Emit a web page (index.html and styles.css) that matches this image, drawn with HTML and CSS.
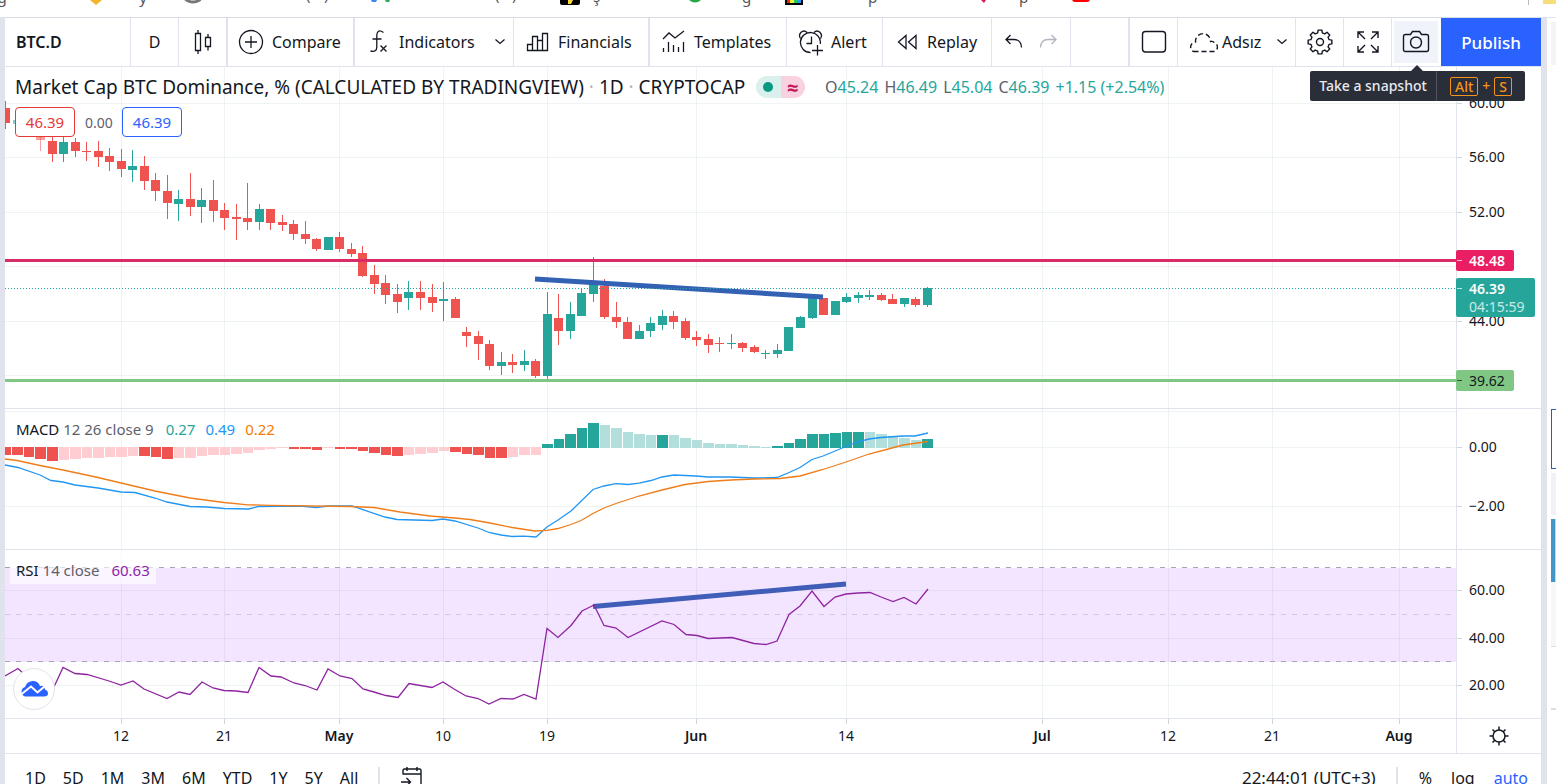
FILE: index.html
```html
<!DOCTYPE html>
<html lang="en">
<head>
<meta charset="utf-8">
<title>BTC.D 46.39</title>
<link rel="stylesheet" href="styles.css">
</head>
<body>
<div class="app">
  <div class="bookmarks">
    <svg width="100%" height="17" aria-hidden="true">
      <g class="bm-text">
        <text x="2" y="3" text-anchor="middle">g</text>
        <text x="143" y="3" text-anchor="middle">y</text>
        <text x="306" y="0">(</text><text x="324" y="0">)</text>
        <text x="495" y="0">(</text><text x="512" y="0">)</text>
        <text x="593" y="2">ş</text>
        <text x="742" y="3">g</text>
        <text x="868" y="3">p</text>
        <text x="1019" y="3">p</text>
      </g>
      <path d="M90 0h12l-6 5z" fill="#f4b42c"/>
      <path d="M185 -3a8 5 0 0 0 16 0" fill="none" stroke="#777" stroke-width="3"/>
      <path d="M371 0h6l-1 2h-4z" fill="#4285f4"/><path d="M385 0h5l-1 2h-3z" fill="#34a853"/>
      <rect x="560" y="-6" width="20" height="11" rx="2" fill="#000"/><path d="M568 0h5l-2 4h-3z" fill="#fdd835"/>
      <path d="M689 0h12q-6 5-12 0z" fill="#28a745"/>
      <rect x="785" y="0" width="18" height="5" fill="#000"/><path d="M787 0h3v3h-3z" fill="#e22"/><path d="M790 0h4v3h-4z" fill="#ee3"/><path d="M794 0h3v3h-3z" fill="#2c5"/><path d="M797 0h4v3h-4z" fill="#29f"/>
      <path d="M981 0h5l-2 3z" fill="#d81b60"/>
      <rect x="1072" y="-8" width="18" height="10" rx="3" fill="#f00"/>
      <path d="M1528.500 0v5" stroke="#bbb"/>
      <rect x="1543" y="-8" width="20" height="12" rx="1" fill="#f8dc78"/>
    </svg>
  </div>
  <div class="workspace">
    <main class="terminal">
      <header class="toolbar">
        <button class="tb tb-symbol">BTC.D</button>
        <button class="tb tb-icon">D</button>
        <button class="tb tb-icon thick" aria-label="Candles">
          <svg width="28" height="28"><path fill="none" stroke="currentColor" stroke-width="1.300" d="M6.500 5.500h5v17h-5zM9 2v3.500M9 22.500v3.500M16.500 9.500h5v9h-5zM19 6v3.500M19 18.500v4"/></svg>
        </button>
        <button class="tb tb-compare thick">
          <svg width="26" height="26"><g fill="none" stroke="currentColor" stroke-width="1.300"><circle cx="13" cy="13" r="11.500"/><path d="M7 13h12M13 7v12"/></g></svg>
          Compare
        </button>
        <button class="tb tb-indicators">
          <svg width="22" height="26"><g fill="none" stroke="currentColor" stroke-width="1.300"><path d="M15.500 3.500Q9.500-.5 8.800 6V18q0 5.500-6.300 4M4.500 10h9M12.500 16.500l6 6M18.500 16.500l-6 6"/></g></svg>
          <span>Indicators</span>
          <svg class="caret" width="12" height="8"><path d="M1.500 1.500l4.500 4 4.500-4" fill="none" stroke="currentColor" stroke-width="1.300"/></svg>
        </button>
        <button class="tb tb-financials thick">
          <svg width="24" height="24"><g fill="none" stroke="currentColor" stroke-width="1.300"><path d="M1.500 14.500h5v6h-5zM6.500 6.500h5v14h-5zM11.500 10.500h5v10h-5zM16.500 3.500h5v17h-5z"/></g></svg>
          Financials
        </button>
        <button class="tb tb-templates">
          <svg width="24" height="26"><g fill="none" stroke="currentColor" stroke-width="1.300"><path d="M1 10l6-6 6 5 9-7M1.500 19v4M6.500 13v10M11.500 16v7M16.500 18v5M21.500 13v10"/></g></svg>
          Templates
        </button>
        <button class="tb tb-alert">
          <svg width="26" height="28"><g fill="none" stroke="currentColor" stroke-width="1.300"><path d="M12.500 24.500A10 10 0 1 1 22.300 16M13.500 8.500v7H8.500M14 22.500h11M19.500 17v10.500M2.500 10.500C-.5 6 5 .5 9 4.500M22.500 10.500C25.500 6 20 .5 16 4.500"/></g></svg>
          Alert
        </button>
        <button class="tb tb-replay">
          <svg width="20" height="18"><g fill="none" stroke="currentColor" stroke-width="1.300"><path d="M9 2.500v13L1.500 9zM19 2.500v13L11.500 9z"/></g></svg>
          Replay
        </button>
        <div class="tb tb-history">
          <button class="bare" aria-label="Undo"><svg width="20" height="18"><path d="M6.500 2L2 6.500 6.500 11M2 6.500h8q7 0 7.500 8" fill="none" stroke="currentColor" stroke-width="1.300"/></svg></button>
          <button class="bare" aria-label="Redo" disabled><svg width="20" height="18"><path d="M13.500 2L18 6.500 13.500 11M18 6.500h-8q-7 0-7.500 8" fill="none" stroke="currentColor" stroke-width="1.300"/></svg></button>
        </div>
        <div class="tb tb-fill thick"></div>
        <button class="tb tb-icon" aria-label="Select layout"><svg width="26" height="24"><rect x="1.500" y="1.500" width="23" height="20.500" rx="3" fill="none" stroke="currentColor" stroke-width="1.400"/></svg></button>
        <button class="tb tb-layout">
          <svg width="32" height="24"><path d="M6.500 21.500h19.500a4.500 4.500 0 0 0 2-8.500q-2-2-4.500-1.500a7.500 7.500 0 0 0-14.500-3q-.6 1.500-.5 3.500A5 5 0 0 0 6.500 21.500z" fill="none" stroke="currentColor" stroke-width="1.400" stroke-dasharray="5 3"/></svg>
          <span>Adsız</span>
          <svg class="caret" width="12" height="8"><path d="M1.500 1.500l4.500 4 4.500-4" fill="none" stroke="currentColor" stroke-width="1.300"/></svg>
        </button>
        <button class="tb tb-icon" aria-label="Chart settings">
          <svg width="28" height="28" viewBox="-14 -14 28 28"><g fill="none" stroke="currentColor" stroke-width="1.400"><circle r="3.500"/><path id="gear" stroke-linejoin="round"/></g></svg>
        </button>
        <button class="tb tb-icon" aria-label="Fullscreen">
          <svg width="24" height="24"><path d="M2 8V2h6M2 2l7 7M16 2h6v6M22 2l-7 7M2 16v6h6M2 22l7-7M22 16v6h-6M22 22l-7-7" fill="none" stroke="currentColor" stroke-width="1.400"/></svg>
        </button>
        <div class="tb-snap">
          <button class="snap" aria-label="Take a snapshot">
            <svg width="28" height="24"><g fill="none" stroke="currentColor" stroke-width="1.400"><path d="M3.500 4.500h5l2-3h7l2 3h5q2 0 2 2v13q0 2-2 2h-21q-2 0-2-2v-13q0-2 2-2z"/><circle cx="14" cy="12.500" r="5.500"/></g></svg>
          </button>
          <div class="tooltip" role="tooltip"><span class="tip-text">Take a snapshot</span><span class="tip-keys"><kbd>Alt</kbd>+<kbd>S</kbd></span></div>
        </div>
        <button class="publish">Publish</button>
      </header>

      <div class="charts">
        <section class="pane pane-price">
          <svg class="plot" id="plot-price" width="100%" height="341"></svg>
          <div class="legend">
            <div class="title-row">
              <span class="title">Market Cap BTC Dominance, % (CALCULATED BY TRADINGVIEW) <i>·</i> 1D <i>·</i> CRYPTOCAP</span>
              <span class="status"><b class="st-open"></b><b class="st-delay">≈</b></span>
              <span class="ohlc"><span>O<em>45.24</em></span><span>H<em>46.49</em></span><span>L<em>45.04</em></span><span>C<em>46.39</em></span><em>+1.15 (+2.54%)</em></span>
            </div>
            <div class="trade-row"><button class="sell">46.39</button><span class="spread">0.00</span><button class="buy">46.39</button></div>
          </div>
        </section>
        <svg class="scale" id="scale-price" width="84" height="341"></svg>
        <section class="pane">
          <svg class="plot" id="plot-macd" width="100%" height="140"></svg>
          <div class="study">MACD <span class="args">12 26 close 9</span><span class="v-green">0.27</span><span class="v-blue">0.49</span><span class="v-orange">0.22</span></div>
        </section>
        <svg class="scale" id="scale-macd" width="84" height="140"></svg>
        <section class="pane">
          <svg class="plot" id="plot-rsi" width="100%" height="168"></svg>
          <div class="study study-rsi">RSI <span class="args">14 close</span><span class="v-purple">60.63</span></div>
          <a class="logo" href="#" aria-label="TradingView"><svg width="28" height="18"><path d="M5 16.500a5 5 0 0 1 0-9.500Q7 1 13 1q5 0 7 5 4-1 5 3.500 3 1 3 4t-4 3z" fill="#2962ff"/><path d="M1 14.500l10-8 6.500 6L25 6" fill="none" stroke="#fff" stroke-width="2"/></svg></a>
        </section>
        <svg class="scale" id="scale-rsi" width="84" height="168"></svg>
        <svg class="times" id="times" width="100%" height="34"></svg>
        <button class="scale scale-settings" aria-label="Scale settings">
          <svg width="20" height="20" viewBox="-10 -10 20 20"><g fill="none" stroke="currentColor" stroke-width="1.500"><circle r="6"/><path d="M0-9.500V-6M0 9.500V6M-9.500 0H-6M9.500 0H6M-6.500-6.500L-4-4M6.500 6.500L4 4M-6.500 6.500L-4 4M6.500-6.500L4-4"/></g></svg>
        </button>
      </div>

      <footer class="ranges">
        <div class="range-list">
          <button>1D</button><button>5D</button><button>1M</button><button>3M</button><button>6M</button><button>YTD</button><button>1Y</button><button>5Y</button><button>All</button>
        </div>
        <button class="goto" aria-label="Go to date"><svg width="24" height="24"><path d="M3 8.500V4.500q0-1.500 1.500-1.500h15q1.500 0 1.500 1.500V20.500h-7M3 8h18M7 1v4M17 1v4M1 16h9M6.500 12l4 4-4 4" fill="none" stroke="currentColor" stroke-width="1.400"/></svg></button>
        <button class="clock">22:44:01 (UTC+3)</button>
        <div class="modes"><button>%</button><button>log</button><button class="on">auto</button></div>
      </footer>
    </main>
    <aside class="side">
      <div class="s-head"></div><div class="s-gap"></div><div class="s-box"></div><div class="s-grey"></div><div class="s-blue"></div><div class="s-pale"></div><div class="s-row"></div>
    </aside>
  </div>
</div>
<script src="chart.js"></script>
</body>
</html>
```

FILE: styles.css
```css
* { box-sizing: border-box; }
body {
  margin: 0;
  background: #fff;
  color: #131722;
  font-family: "Noto Sans", "Open Sans", sans-serif;
  font-size: 16px;
}
button {
  margin: 0;
  padding: 0;
  border: 0;
  background: none;
  color: inherit;
  font: inherit;
  white-space: nowrap;
}
svg { display: block; flex: none; }
.app { display: flex; flex-direction: column; height: 100vh; overflow: hidden; }
.bookmarks { flex: none; height: 17px; overflow: hidden; }
.bm-text { font-size: 15px; fill: #555; }
.workspace { display: flex; flex: 1; min-height: 0; border-left: 5px solid #e0e3eb; }
.terminal { flex: 1; min-width: 0; border-right: 0; }

.toolbar {
  display: flex;
  height: 50px;
  border-top: 1px solid #d9dce3;
  border-bottom: 1px solid #e0e3eb;
}
.tb {
  display: flex;
  align-items: center;
  flex: none;
  gap: 8px;
  border-right: 1px solid #e0e3eb;
}
.thick { border-right-width: 2px; }
.tb-symbol { width: 126px; padding-left: 11px; font-weight: 600; }
.tb-icon { width: 48px; justify-content: center; }
.tb-icon.thick { width: 49px; }
.tb-compare { width: 127px; padding-left: 10px; }
.tb-indicators { width: 159px; padding: 0 7px 0 13px; }
.tb-indicators span { margin-left: 1px; }
.caret { margin-left: auto; }
.tb-financials { width: 136px; padding-left: 12px; }
.tb-templates { width: 137px; padding-left: 12px; }
.tb-alert { width: 96px; padding-left: 11px; gap: 7px; }
.tb-replay { width: 109px; padding-left: 14px; gap: 10px; }
.tb-history { width: 79px; justify-content: center; gap: 14px; }
.bare:disabled { color: #b2b5be; }
.tb-fill { flex: 1; }
.tb-layout { width: 118px; padding: 0 7px 0 9px; gap: 3px; }
.tb-snap { position: relative; flex: none; width: 49px; padding: 3px 2px; }
.snap {
  display: flex;
  align-items: center;
  justify-content: center;
  width: 44px;
  height: 42px;
  background: #f0f3fa;
}
.publish { flex: none; width: 100px; background: #2962ff; color: #fff; font-size: 17px; font-weight: 500; }
.tooltip {
  position: absolute;
  z-index: 5;
  top: 53px;
  right: -84px;
  display: flex;
  height: 30px;
  border-radius: 2px;
  background: #2a2e39;
  color: #e8eaf0;
  white-space: nowrap;
  line-height: 30px;
  font-size: 14px;
  font-weight: 500;
}
.tooltip::before {
  content: "";
  position: absolute;
  top: -6px;
  left: 100px;
  border: 7px solid transparent;
  border-top: 0;
  border-bottom-color: #2a2e39;
}
.tip-text { width: 127px; text-align: center; border-right: 1px solid #50535e; }
.tip-keys { display: flex; align-items: center; justify-content: center; gap: 4px; width: 88px; color: #f7931a; }
kbd { padding: 0 4px; border: 1px solid #f7931a; border-radius: 2px; font: inherit; line-height: 17px; }

.charts { display: grid; grid-template-columns: minmax(0, 1fr) 85px; }
.pane { position: relative; overflow: hidden; border-bottom: 1px solid #e0e3eb; }
.scale { border-left: 1px solid #e0e3eb; border-bottom: 1px solid #e0e3eb; width: 85px; box-sizing: content-box; }
svg.scale { width: 84px; font-size: 14px; overflow: visible; }
.times { border-bottom: 1px solid #e0e3eb; box-sizing: content-box; font-size: 14px; }
.scale-settings { display: flex; align-items: center; justify-content: center; width: 84px; }
.month { font-weight: 600; }
.hgrid, .vgrid { stroke: #2a6478; stroke-opacity: .08; }
.tick { stroke: #d1d4dc; }

.legend { position: absolute; top: 7px; left: 10px; }
.title-row { display: flex; align-items: center; height: 26px; white-space: nowrap; }
.title { width: 741px; font-size: 19px; }
.title i { color: #b2b5be; font-style: normal; }
.status { display: flex; width: 49px; height: 22px; margin-right: 20px; border-radius: 11px; overflow: hidden; }
.status b { flex: 1; display: flex; align-items: center; justify-content: center; }
.st-open { background: #d9f0ed; }
.st-open::before { content: ""; width: 10px; height: 10px; border-radius: 50%; background: #089981; }
.st-delay { background: #fad1df; color: #c2185b; font-size: 20px; }
.ohlc { display: flex; gap: 6px; font-size: 16px; color: #5d606b; }
.ohlc em { font-style: normal; color: #26a69a; }
.trade-row { display: flex; align-items: center; gap: 10px; margin-top: 7px; }
.sell, .buy { width: 60px; height: 30px; border: 1px solid; border-radius: 4px; background: #fff; font-size: 15px; }
.sell { color: #e53935; }
.buy { color: #2962ff; }
.spread { width: 27px; font-size: 14px; color: #5d606b; }
.study { position: absolute; top: 8px; left: 5px; padding: 0 6px; height: 24px; line-height: 24px; font-size: 15px; white-space: nowrap; }
.study-rsi { top: 0; height: 34px; padding-top: 8px; background: rgba(255, 255, 255, .6); }
.args { color: #5d606b; margin-right: 12px; }
.v-green { color: #26a69a; margin-right: 10px; }
.v-blue { color: #2196f3; margin-right: 10px; }
.v-orange { color: #f57c00; }
.v-purple { color: #8e24aa; }
.logo {
  position: absolute;
  left: 8px;
  bottom: 8px;
  display: flex;
  align-items: center;
  justify-content: center;
  width: 42px;
  height: 42px;
  border: 1px solid #e0e3eb;
  border-radius: 50%;
  background: #fff;
}

.ranges { display: flex; align-items: center; height: 48px; }
.range-list { display: flex; gap: 17px; padding: 0 20px; border-right: 2px solid #e0e3eb; }
.goto { margin-left: 20px; }
.clock { margin-left: auto; padding-right: 20px; border-right: 2px solid #e0e3eb; font-size: 17px; line-height: 22px; }
.modes { display: flex; gap: 19px; padding: 0 13px 0 21px; }
.on { color: #2962ff; }

.side { display: flex; flex-direction: column; flex: none; width: 15px; padding: 4px 0 0 4px; border-left: 6px solid #e0e3eb; border-top: 1px solid #e0e3eb; }
.side div { flex: none; }
.s-head { height: 43px; background: #f4f4f6; }
.s-gap { height: 344px; }
.s-box { height: 60px; border: 1px solid #2a5db0; border-right: 0; }
.s-grey { height: 42px; margin: 4px 0; background: #f0f2f5; }
.s-blue { height: 63px; border-left: 4px solid #4596c8; background: #b9dcf0; }
.s-pale { height: 65px; background: #f7f7f8; border-bottom: 1px solid #ddd; }
.s-row { height: 63px; border-bottom: 2px solid #ddd; }
```

FILE: chart.js
```js
const NS = 'http://www.w3.org/2000/svg';
const STEP = 11.515;
const barX = i => 116.6 + STEP * i;

function add(parent, tag, attrs, text) {
  const el = document.createElementNS(NS, tag);
  for (const k in attrs) el.setAttribute(k, attrs[k]);
  if (text !== undefined) el.textContent = text;
  parent.appendChild(el);
  return el;
}
const get = id => document.getElementById(id);

const dates = [[116, '12'], [219, '21'], [334, 'May'], [438, '10'], [542, '19'], [691, 'Jun'], [841, '14'], [1037, 'Jul'], [1163, '12'], [1267, '21'], [1394, 'Aug']];

function grid(svg, rows) {
  rows.forEach(y => add(svg, 'line', { class: 'hgrid', x1: 0, x2: '100%', y1: y + .5, y2: y + .5 }));
  dates.forEach(d => add(svg, 'line', { class: 'vgrid', x1: d[0] + .5, x2: d[0] + .5, y1: 0, y2: '100%' }));
}
function scale(svg, items) {
  items.forEach(([y, label]) => {
    add(svg, 'line', { class: 'tick', x1: 0, x2: 5, y1: y + .5, y2: y + .5 });
    add(svg, 'text', { x: 12, y: y + 5, fill: '#131722' }, label);
  });
}
function line(svg, color, pts, dy) {
  add(svg, 'polyline', { fill: 'none', stroke: color, 'stroke-width': 1.3, points: pts.map(p => (p[0] - 5) + ',' + (p[1] - dy)).join(' ') });
}

/* Price pane: [body top, body bottom, high, low, rising] per day, Apr 2 first */
const candles = [
  [108,123,101,129,0],[120,124,120,124,1],[124,136,116,136,0],[134,140,126,151,0],[141,154,136,162,0],[142,154,136,162,1],[142,151,138,157,0],[151,152,142,161,0],
  [151,157,141,167,0],[156,162,148,171,0],[161,169,149,177,0],[166,170,150,182,1],[166,181,156,190,0],[180,191,173,201,0],[191,203,175,219,0],
  [199,204,190,221,1],[199,207,173,216,0],[200,207,188,223,1],[200,211,180,222,0],[210,218,203,230,0],[217,219,204,240,0],[218,222,183,230,0],
  [209,222,204,230,1],[209,223,209,230,0],[222,225,215,231,0],[224,234,220,240,0],[234,239,221,244,0],[239,249,238,251,0],[237,250,237,250,1],
  [237,249,232,252,0],[249,254,243,257,0],[253,276,246,277,0],[275,284,265,294,0],[283,295,275,304,0],[294,302,284,313,0],[292,298,281,310,1],
  [292,298,281,310,0],[297,303,284,312,0],[299,301,282,321,1],[299,318,297,318,0],[332,336,327,347,0],[336,344,331,360,0],[344,366,340,370,0],
  [362,366,352,375,1],[362,365,354,373,0],[361,365,350,371,1],[361,376,359,378,0],[314,376,292,379,1],[318,331,294,345,0],[314,331,302,339,1],
  [293,316,288,316,1],[283,294,257,302,1],[286,317,279,319,0],[317,322,302,328,0],[322,339,317,339,0],[331,339,325,339,1],[323,331,317,337,1],
  [316,325,310,330,1],[316,322,311,329,0],[321,338,318,340,0],[337,340,331,346,0],[339,345,334,353,0],[343,344,337,352,0],[343,344,334,349,1],
  [343,348,342,352,0],[347,352,345,353,0],[353,354,350,359,1],[350,354,344,358,1],[327,351,327,351,1],[317,328,316,328,1],[298,318,297,319,1],
  [298,315,298,315,0],[301,315,301,315,1],[297,302,293,303,1],[295,298,292,303,1],[295,297,290,300,1],[295,300,293,301,0],[299,304,294,304,0],
  [298,304,298,307,1],[299,305,297,307,0],[288,305,287,307,1]
];
const price = get('plot-price');
grid(price, [36, 90, 145, 199, 254, 308]);
candles.forEach((c, n) => {
  const cx = Math.floor(barX(n - 10) - .5);
  const fill = c[4] ? '#26a69a' : '#ef5350';
  const opacity = n > 0 && n < 4 ? .55 : 1;
  add(price, 'rect', { x: cx, y: c[2] - 67, width: 1, height: c[3] - c[2], fill, opacity });
  add(price, 'rect', { x: cx - 4, y: c[0] - 67, width: 9, height: c[1] - c[0], fill, opacity });
});
add(price, 'line', { x1: 530, y1: 212, x2: 818, y2: 230, stroke: '#3362b4', 'stroke-width': 5 });
add(price, 'line', { x1: 0, x2: '100%', y1: 193.5, y2: 193.5, stroke: '#d92b66', 'stroke-width': 3 });
add(price, 'line', { x1: 0, x2: '100%', y1: 313.5, y2: 313.5, stroke: '#81c784', 'stroke-width': 3 });
add(price, 'line', { x1: 0, x2: '100%', y1: 221.5, y2: 221.5, stroke: '#26a69a', 'stroke-dasharray': '1 2' });

const ps = get('scale-price');
scale(ps, [[36, '60.00'], [90, '56.00'], [145, '52.00'], [199, '48.00'], [254, '44.00']]);
function tag(y, h, w, fill, ink, texts) {
  add(ps, 'rect', { x: -1, y, width: w, height: h, rx: 2, fill });
  texts.forEach(([dy, s, o, weight]) => add(ps, 'text', { x: 12, y: y + dy, fill: ink, opacity: o, 'font-weight': weight }, s));
}
tag(183, 21, 58, '#e91e63', '#fff', [[16, '48.48', 1, 600]]);
tag(211, 39, 79, '#26a69a', '#fff', [[16, '46.39', 1, 600], [34, '04:15:59', .75, 400]]);
tag(303, 21, 58, '#81c784', '#131722', [[16, '39.62', 1, 400]]);
[[193, '#fff'], [221, '#fff'], [313, '#131722']].forEach(([y, stroke]) => add(ps, 'line', { x1: 0, x2: 5, y1: y + .5, y2: y + .5, stroke, 'stroke-opacity': .7 }));

/* MACD pane: [bar edge, growing] */
const hist = [
  [455,1],[455,1],[457,1],[459,1],[461,1],[460,0],[459,0],[458,0],[458,0],[457,0],[457,0],[456,0],[456,1],[457,1],[459,1],[458,0],[458,0],[456,0],[455,0],[455,0],[454,0],[453,0],
  [450,0],[449,0],[448,0],[449,1],[449,1],[450,1],[448,0],[449,1],[449,1],[451,1],[453,1],[455,1],[456,1],[455,0],[454,0],[453,0],[451,0],[452,1],[454,1],[455,1],[458,1],[458,1],
  [457,0],[455,0],[455,0],[444,1],[439,1],[434,1],[428,1],[423,1],[425,0],[428,0],[432,0],[434,0],[435,0],[435,1],[435,0],[438,0],[440,0],[443,0],[444,0],[444,0],[445,0],[446,0],
  [447,0],[446,1],[443,1],[439,1],[434,1],[434,1],[433,1],[432,1],[432,1],[432,0],[434,0],[436,0],[438,0],[440,0],[439,1]
];
const macd = get('plot-macd');
grid(macd, [2, 38, 97]);
hist.forEach(([y, grow], n) => {
  const down = n < 47;
  const l = Math.round(barX(n - 10) - 5.5);
  const r = Math.round(barX(n - 9) - 5.5);
  const fill = down ? (grow ? '#ef5350' : '#ffcdd2') : (grow ? '#26a69a' : '#b2dfdb');
  add(macd, 'rect', { x: l, y: (down ? 447 : y) - 409, width: r - l - 1, height: down ? y - 447 : 448 - y, fill });
});
line(macd, '#2196f3', [[5,465],[18,467.5],[40,475],[51,480.5],[63,482],[75,485],[98,488],[121,492],[135,492.5],[155,498],[167,502],[190,506.5],[207,507],[224,508.5],[249,509],[258,506.5],[300,506],[316,507.5],[328,506],[352,506],[385,517],[397,519.5],[432,520.5],[443,519],[455,521],[478,528],[489,532.5],[501,535],[512,536.5],[524,536.2],[536,537],[547,527],[558,520],[571,511],[593,489.5],[604,486],[616,483.7],[628,484.5],[639,483.2],[651,480.5],[662,477],[674,475],[696,476],[708,477],[731,477],[754,478],[777,477.5],[788,473],[800,467.5],[812,459.5],[823,456],[846,446.5],[857,442],[869,439],[881,437.5],[903,436],[915,436],[928,433]], 409);
line(macd, '#ef7d1a', [[5,459],[17,460.5],[40,465.5],[63,470],[98,477.5],[121,483],[155,491],[190,498],[224,502.5],[248,504.8],[270,505.3],[350,506.5],[374,507.5],[400,512],[430,516],[455,518],[470,519.5],[490,523],[512,527.5],[535,531],[547,530.3],[558,528.5],[571,524.5],[581,520.5],[593,513.5],[604,508],[616,503.5],[639,496],[662,490],[685,484.5],[708,481.5],[731,480],[754,479],[780,478.5],[792,477],[800,476],[823,469.5],[846,462],[869,454],[892,448],[903,445],[928,441.5]], 409);
scale(get('scale-macd'), [[38, '0.00'], [97, '−2.00']]);

/* RSI pane */
const rsi = get('plot-rsi');
add(rsi, 'rect', { x: 0, y: 18, width: '100%', height: 94, fill: '#f3e5ff' });
grid(rsi, [40, 88, 135]);
[[17, '#a9a3b5'], [64, '#d3c6e0'], [111, '#a9a3b5']].forEach(([y, stroke]) => add(rsi, 'line', { x1: 0, x2: '100%', y1: y + .5, y2: y + .5, stroke, 'stroke-dasharray': '5 6' }));
add(rsi, 'line', { x1: 588, y1: 56.5, x2: 841, y2: 34, stroke: '#405db8', 'stroke-width': 5 });
line(rsi, '#8e24a0', [[5,676],[18,668.5],[24,674],[40,690],[54,687],[63,667.5],[75,673.5],[87,674.5],[109,681],[121,685],[133,681],[144,689],[167,698.5],[179,692],[190,694.5],[202,682],[213,688],[224,690.5],[236,691],[248,692.5],[259,667.5],[271,676],[281,677],[294,683],[305,685.5],[317,690],[328,669],[340,676],[352,678.5],[363,689],[374,692],[386,695.5],[398,697.5],[409,683.5],[432,687.5],[443,682],[454,689],[466,696],[478,698.5],[489,704],[501,698.5],[513,699],[524,694.5],[536,699],[547,628.5],[558,637.5],[571,625.5],[582,611],[594,605],[604,625.5],[616,628],[628,637.5],[662,621],[674,624.5],[686,634.5],[697,635.5],[708,638.5],[732,637.5],[754,643.5],[766,644.5],[777,641],[789,614.5],[800,606],[812,591],[824,606.5],[835,597],[846,594],[858,593],[870,592.5],[881,597],[893,601.5],[904,597.5],[916,604],[928,589]], 550);
scale(get('scale-rsi'), [[40, '60.00'], [88, '40.00'], [135, '20.00']]);

const times = get('times');
dates.forEach(([x, label]) => {
  add(times, 'line', { class: 'tick', x1: x + .5, x2: x + .5, y1: 0, y2: 5 });
  add(times, 'text', { x, y: 22, 'text-anchor': 'middle', fill: '#131722', class: /[a-z]/.test(label) ? 'month' : 'day' }, label);
});

/* Eight-toothed settings gear */
let d = '';
for (let k = 0; k < 8; k++) {
  const a = k * Math.PI / 4;
  [[-.25, 9.4], [-.16, 12], [.16, 12], [.25, 9.4]].forEach(([o, r], j) => {
    d += (k || j ? 'L' : 'M') + (r * Math.sin(a + o)).toFixed(2) + ' ' + (-r * Math.cos(a + o)).toFixed(2);
  });
}
get('gear').setAttribute('d', d + 'z');
```
